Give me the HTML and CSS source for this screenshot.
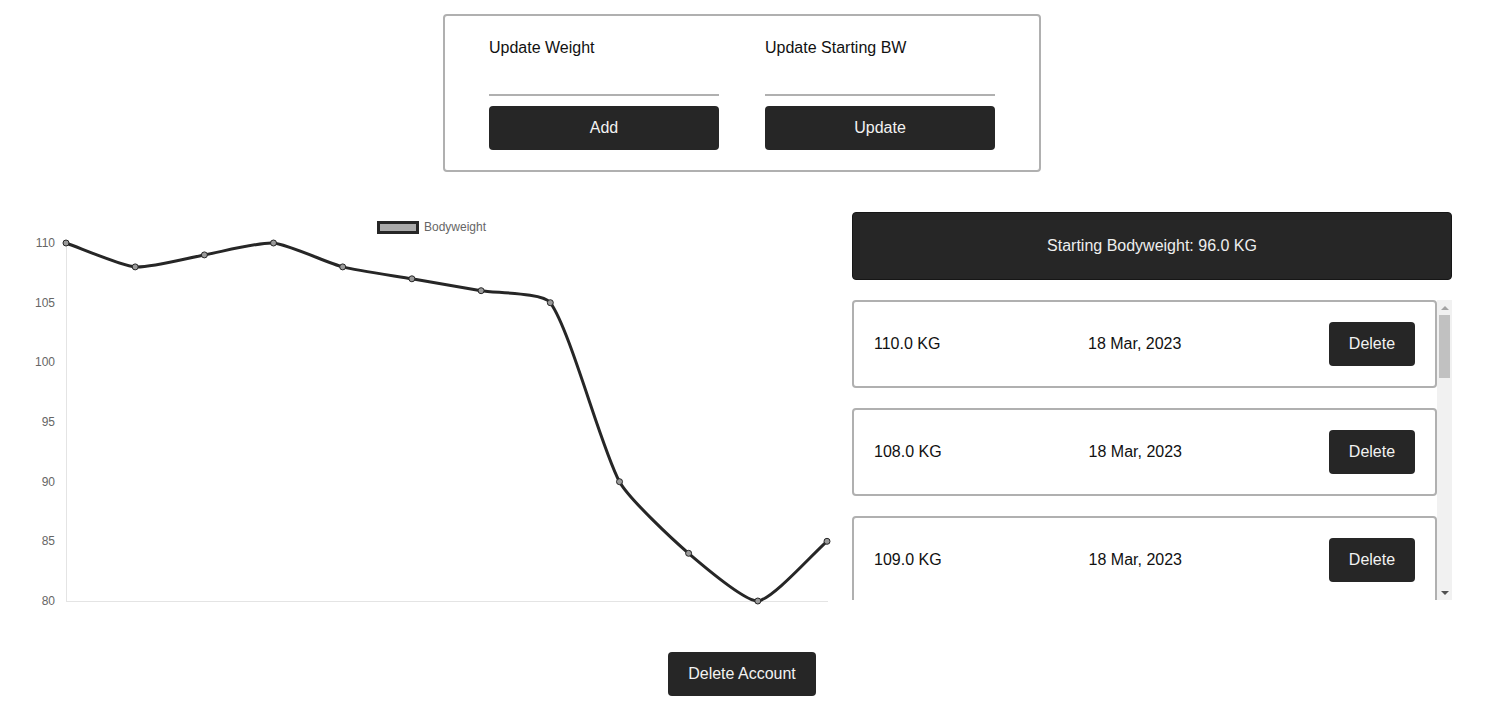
FILE: index.html
```html
<!DOCTYPE html>
<html>
<head>
<meta charset="utf-8">
<title>Bodyweight</title>
<link rel="stylesheet" href="styles.css">
</head>
<body>
<div class="page">
  <section class="update-card">
    <div class="field">
      <label class="field-label">Update Weight</label>
      <input class="field-input" type="text">
      <button class="btn btn-block">Add</button>
    </div>
    <div class="field">
      <label class="field-label">Update Starting BW</label>
      <input class="field-input" type="text">
      <button class="btn btn-block">Update</button>
    </div>
  </section>

  <main class="main-row">
    <div class="chart">
      <svg class="chart-svg" width="840" height="400" viewBox="0 212 840 400" xmlns="http://www.w3.org/2000/svg">
        <g class="legend">
          <rect x="378.5" y="222.5" width="39" height="10" fill="#aaaaaa" stroke="#262626" stroke-width="3"/>
          <text x="424" y="231" font-size="12" fill="#666">Bodyweight</text>
        </g>
        <g class="axes" stroke="#e4e4e4" stroke-width="1">
          <line x1="66.5" y1="243" x2="66.5" y2="601"/>
          <line x1="66" y1="601.5" x2="828" y2="601.5"/>
        </g>
        <g class="ticks" font-size="12" fill="#666" text-anchor="end">
          <text x="55" y="247">110</text>
          <text x="55" y="307">105</text>
          <text x="55" y="366">100</text>
          <text x="55" y="426">95</text>
          <text x="55" y="486">90</text>
          <text x="55" y="545">85</text>
          <text x="55" y="605">80</text>
        </g>
        <path fill="none" stroke="#262626" stroke-width="3" stroke-linejoin="round" d="M66,243 C79.8,247.8 121.1,265.7 135.2,266.9 C148.8,268.1 190.6,257.3 204.4,254.9 C218.3,252.5 260.0,241.8 273.5,243 C287.6,244.2 328.6,263.3 342.7,266.9 C356.3,270.4 398.1,276.4 411.9,278.8 C425.8,281.2 467.3,288.3 481.1,290.7 C494.9,293.1 542.9,292.5 550.3,302.7 C570.6,330.7 601.3,448.8 619.5,481.7 C629.0,498.9 673.6,540.4 688.6,553.3 C701.3,564.2 744.5,601 757.8,601 C772.2,599.8 813.2,553.2 827,541.3"/>
        <g class="points" fill="#9a9a9a" stroke="#262626" stroke-width="1">
          <circle cx="66" cy="243" r="3"/>
          <circle cx="135.2" cy="266.9" r="3"/>
          <circle cx="204.4" cy="254.9" r="3"/>
          <circle cx="273.5" cy="243" r="3"/>
          <circle cx="342.7" cy="266.9" r="3"/>
          <circle cx="411.9" cy="278.8" r="3"/>
          <circle cx="481.1" cy="290.7" r="3"/>
          <circle cx="550.3" cy="302.7" r="3"/>
          <circle cx="619.5" cy="481.7" r="3"/>
          <circle cx="688.6" cy="553.3" r="3"/>
          <circle cx="757.8" cy="601" r="3"/>
          <circle cx="827" cy="541.3" r="3"/>
        </g>
      </svg>
    </div>

    <aside class="panel">
      <div class="starting-bw">Starting Bodyweight: 96.0 KG</div>
      <div class="entries-wrap">
        <div class="entries">
          <div class="entry"><span class="entry-weight">110.0 KG</span><span class="entry-date">18 Mar, 2023</span><button class="btn btn-delete">Delete</button></div>
          <div class="entry"><span class="entry-weight">108.0 KG</span><span class="entry-date">18 Mar, 2023</span><button class="btn btn-delete">Delete</button></div>
          <div class="entry"><span class="entry-weight">109.0 KG</span><span class="entry-date">18 Mar, 2023</span><button class="btn btn-delete">Delete</button></div>
          <div class="entry"><span class="entry-weight">110.0 KG</span><span class="entry-date">18 Mar, 2023</span><button class="btn btn-delete">Delete</button></div>
          <div class="entry"><span class="entry-weight">108.0 KG</span><span class="entry-date">18 Mar, 2023</span><button class="btn btn-delete">Delete</button></div>
          <div class="entry"><span class="entry-weight">107.0 KG</span><span class="entry-date">18 Mar, 2023</span><button class="btn btn-delete">Delete</button></div>
          <div class="entry"><span class="entry-weight">106.0 KG</span><span class="entry-date">18 Mar, 2023</span><button class="btn btn-delete">Delete</button></div>
          <div class="entry"><span class="entry-weight">105.0 KG</span><span class="entry-date">18 Mar, 2023</span><button class="btn btn-delete">Delete</button></div>
          <div class="entry"><span class="entry-weight">90.0 KG</span><span class="entry-date">18 Mar, 2023</span><button class="btn btn-delete">Delete</button></div>
          <div class="entry"><span class="entry-weight">84.0 KG</span><span class="entry-date">18 Mar, 2023</span><button class="btn btn-delete">Delete</button></div>
          <div class="entry"><span class="entry-weight">80.0 KG</span><span class="entry-date">18 Mar, 2023</span><button class="btn btn-delete">Delete</button></div>
          <div class="entry"><span class="entry-weight">85.0 KG</span><span class="entry-date">18 Mar, 2023</span><button class="btn btn-delete">Delete</button></div>
        </div>
        <div class="scrollbar" aria-hidden="true">
          <div class="sb-btn"><span class="sb-arrow-up"></span></div>
          <div class="sb-track"><div class="sb-thumb"></div></div>
          <div class="sb-btn"><span class="sb-arrow-down"></span></div>
        </div>
      </div>
    </aside>
  </main>

  <div class="account-actions">
    <button class="btn btn-account">Delete Account</button>
  </div>
</div>
</body>
</html>
```

FILE: styles.css
```css
* {
  box-sizing: border-box;
}

html, body {
  margin: 0;
  padding: 0;
  background: #ffffff;
}

body {
  font-family: "Liberation Sans", Arial, sans-serif;
  font-size: 16px;
  color: #111111;
}

.page {
  padding-top: 14px;
  padding-right: 1px;
}

.update-card {
  width: 598px;
  margin: 0 auto;
  border: 2px solid #b0b0b0;
  border-radius: 4px;
  padding: 23px 44px 20px;
  display: grid;
  grid-template-columns: 230px 230px;
  column-gap: 46px;
}

.field {
  display: flex;
  flex-direction: column;
}

.field-label {
  display: block;
  line-height: 18px;
  font-size: 16px;
  color: #111;
}

.field-input {
  display: block;
  width: 100%;
  height: 39px;
  border: none;
  border-bottom: 2px solid #b0b0b0;
  outline: none;
  background: transparent;
  font-family: inherit;
  font-size: 16px;
  padding: 0;
}

.btn {
  font-family: "Liberation Sans", Arial, sans-serif;
  font-size: 16px;
  background: #262626;
  color: #f2f2f2;
  border: none;
  border-radius: 4px;
  height: 44px;
  cursor: pointer;
}

.btn-block {
  width: 100%;
  margin-top: 10px;
}

.main-row {
  display: flex;
  gap: 12px;
  margin-top: 40px;
}

.chart {
  width: 840px;
  flex: none;
}

.chart-svg {
  display: block;
  font-family: "Liberation Sans", Arial, sans-serif;
}

.panel {
  width: 600px;
  flex: none;
  display: flex;
  flex-direction: column;
  gap: 20px;
}

.starting-bw {
  height: 68px;
  background: #262626;
  border: 1px solid #161616;
  border-radius: 4px;
  color: #eeeeee;
  display: flex;
  align-items: center;
  justify-content: center;
}

.entries-wrap {
  display: flex;
  height: 300px;
}

.entries {
  flex: 1;
  height: 300px;
  overflow: hidden;
}

.entry {
  display: flex;
  align-items: center;
  justify-content: space-between;
  height: 88px;
  padding: 20px;
  border: 2px solid #b0b0b0;
  border-radius: 4px;
  margin-bottom: 20px;
}

.btn-delete {
  width: 86px;
}

.scrollbar {
  width: 15px;
  flex: none;
  display: flex;
  flex-direction: column;
  background: #f1f1f1;
}

.sb-btn {
  height: 15px;
  display: flex;
  align-items: center;
  justify-content: center;
}

.sb-arrow-up {
  width: 0;
  height: 0;
  border-left: 4px solid transparent;
  border-right: 4px solid transparent;
  border-bottom: 4px solid #a3a3a3;
}

.sb-arrow-down {
  width: 0;
  height: 0;
  border-left: 4px solid transparent;
  border-right: 4px solid transparent;
  border-top: 4px solid #505050;
}

.sb-track {
  flex: 1;
  padding: 0 2px;
}

.sb-thumb {
  height: 63px;
  background: #c1c1c1;
}

.account-actions {
  display: flex;
  justify-content: center;
  margin-top: 40px;
}

.btn-account {
  width: 148px;
}
```
